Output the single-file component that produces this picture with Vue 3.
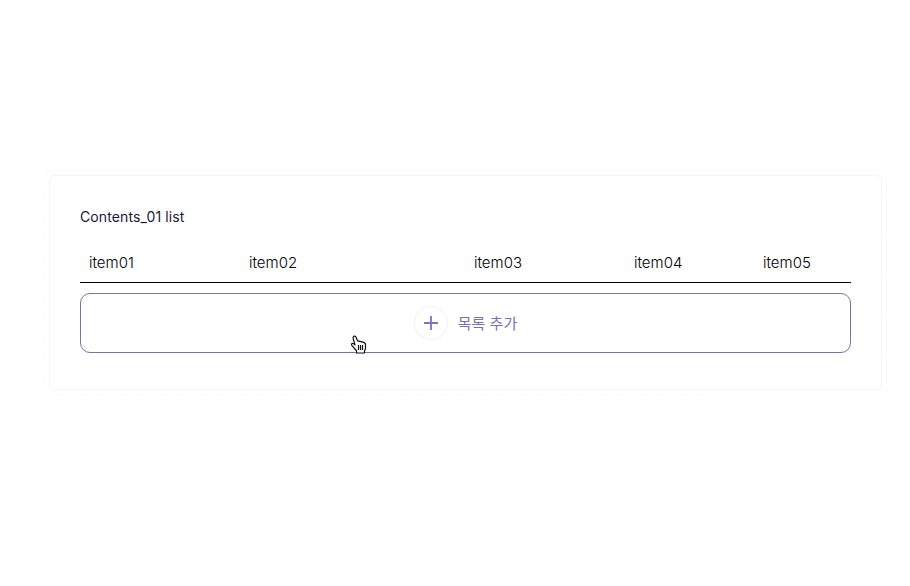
<template>
  <div class="page">
    <section class="card">
      <h2 class="title">Contents_01 list</h2>
      <div class="head">
        <span v-for="col in columns" :key="col" class="head-cell">{{ col }}</span>
      </div>
      <button class="add-button" type="button">
        <span class="plus-circle">
          <svg width="16" height="16" viewBox="0 0 16 16" fill="none">
            <path d="M8 1v14M1 8h14" stroke="#7477c4" stroke-width="1.8" />
          </svg>
        </span>
        <span class="add-label">목록 추가</span>
        <svg class="cursor" width="16" height="19" viewBox="0 0 16 19" fill="#fff" stroke="#111" stroke-width="1.2" stroke-linejoin="round">
          <path d="M2.500 1.500c.8-.8 2-.4 2.400.4l1.800 4 5.200 1.300c1.400.4 2.600 1.200 2.600 2.600v3.200c0 1.200-.4 2-1 2.800v2.200H5.600v-2L1 10.600c-.8-.9-.6-1.900.2-2.100.8-.2 1.600.2 2.800 1.400L2.200 3.600c-.2-.8-.1-1.600.3-2.100z" />
          <path d="M7.500 10v5M9.500 10v5M11.500 10v5" fill="none" />
        </svg>
      </button>
    </section>
  </div>
</template>

<script setup>
const columns = ['item01', 'item02', 'item03', 'item04', 'item05']
</script>

<style>
html,
body {
  margin: 0;
  background: #fff;
}
</style>

<style scoped>
.page {
  box-sizing: border-box;
  width: 910px;
  height: 586px;
  padding: 175px 28px 0 49px;
  font-family: Inter, "Noto Sans CJK KR", sans-serif;
  background: #fff;
}

.card {
  box-sizing: border-box;
  height: 215px;
  padding: 30px 30px 0;
  border: 1px solid #f4f4f6;
  border-radius: 6px;
  outline: 1px dashed #f8f8fc;
  outline-offset: 4px;
}

.title {
  margin: 0;
  font-size: 14px;
  font-weight: 400;
  line-height: 22px;
  letter-spacing: 0.12px;
  color: #17173a;
}

.head {
  display: grid;
  grid-template-columns: 160px 225px 160px 129px 97px;
  box-sizing: border-box;
  height: 40px;
  margin-top: 15px;
  padding-top: 9px;
  border-bottom: 1px solid #000;
}

.head-cell {
  padding-left: 9px;
  font-size: 15px;
  font-weight: 300;
  line-height: 22px;
  color: #000;
}

.add-button {
  position: relative;
  display: flex;
  align-items: center;
  justify-content: center;
  gap: 10px;
  box-sizing: border-box;
  width: 100%;
  height: 60px;
  margin-top: 10px;
  padding: 0;
  border: 1px solid #7b72a8;
  border-radius: 10px;
  background: #fff;
  font-family: inherit;
  cursor: pointer;
}

.plus-circle {
  display: flex;
  align-items: center;
  justify-content: center;
  box-sizing: border-box;
  width: 34px;
  height: 34px;
  border: 1px solid #f0f0f3;
  border-radius: 50%;
}

.add-label {
  padding-bottom: 2px;
  font-size: 15px;
  font-weight: 400;
  color: #7a6fb6;
}

.cursor {
  position: absolute;
  left: 270px;
  top: 41px;
}
</style>
